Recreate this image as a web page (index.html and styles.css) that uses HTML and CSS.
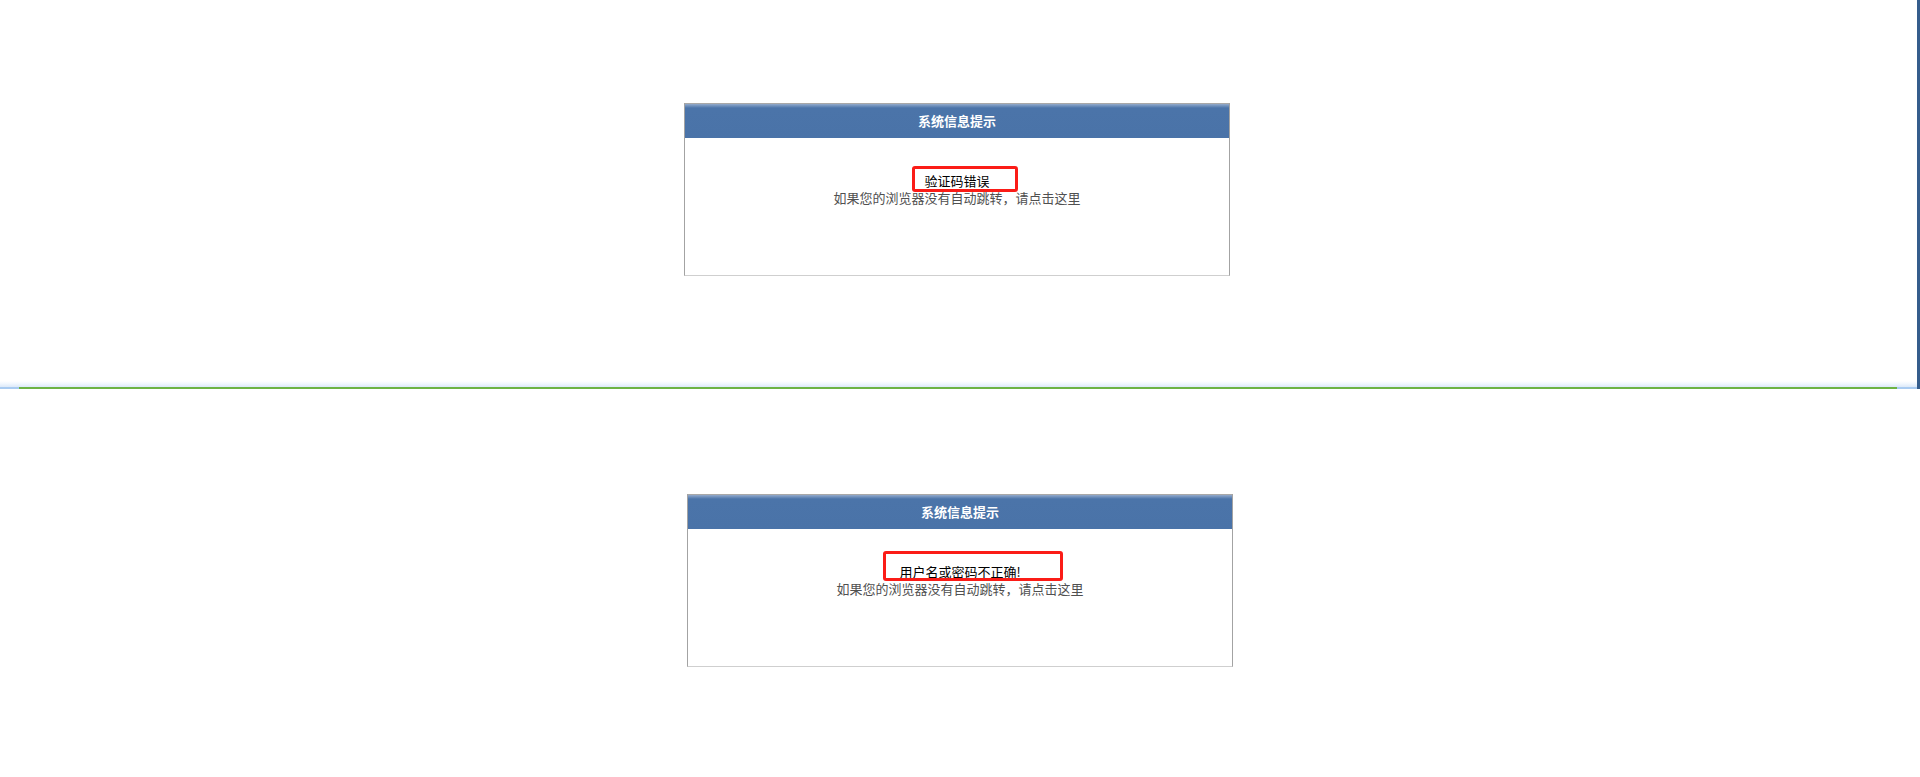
FILE: index.html
```html
<!DOCTYPE html>
<html lang="zh-CN">
<head>
<meta charset="utf-8">
<title>系统信息提示</title>
<link rel="stylesheet" href="styles.css">
</head>
<body>
  <section class="shot shot-top">
    <div class="pane pane-top">
      <div class="msgbox">
        <div class="msgbox-head">系统信息提示</div>
        <div class="msgbox-body">
          <div class="msg-title">验证码错误</div>
          <div class="msg-hint">如果您的浏览器没有自动跳转，请点击这里</div>
          <div class="mark mark-1"></div>
        </div>
      </div>
    </div>
    <div class="edge-bar"></div>
  </section>

  <div class="divider">
    <div class="divider-main">
      <div class="divider-glow"></div>
      <div class="divider-line">
        <span class="cap cap-left"></span>
        <span class="progress"></span>
        <span class="cap cap-right"></span>
      </div>
    </div>
    <div class="edge-bar"></div>
  </div>

  <section class="shot shot-bottom">
    <div class="pane pane-bottom">
      <div class="msgbox">
        <div class="msgbox-head">系统信息提示</div>
        <div class="msgbox-body">
          <div class="msg-title">用户名或密码不正确!</div>
          <div class="msg-hint">如果您的浏览器没有自动跳转，请点击这里</div>
          <div class="mark mark-2"></div>
        </div>
      </div>
    </div>
  </section>
</body>
</html>
```

FILE: styles.css
```css
html, body {
  margin: 0;
  padding: 0;
  background: #ffffff;
}

body {
  font-family: "Noto Sans CJK SC", "Noto Sans", sans-serif;
  font-size: 13px;
  width: 1920px;
  height: 777px;
  overflow: hidden;
}

.shot {
  display: flex;
}

.shot-top {
  height: 381px;
  background: #ffffff;
}

.pane {
  flex: 1;
  display: flex;
  flex-direction: column;
  align-items: center;
}

.pane-top {
  padding-top: 103px;
  padding-right: 3px;
}

.pane-bottom {
  padding-top: 105px;
}

.edge-bar {
  width: 3px;
  flex: none;
  background: #355d8c;
}

/* divider between the two screenshots */
.divider {
  display: flex;
  height: 8px;
}

.divider-main {
  flex: 1;
  display: flex;
  flex-direction: column;
}

.divider-glow {
  flex: 1;
  background: linear-gradient(#ffffff 0%, #f3f8fe 40%, #dce9f9 100%);
}

.divider-line {
  height: 2px;
  display: flex;
}

.cap {
  width: 19px;
  background: #a9cbf1;
}

.cap-right {
  width: 20px;
}

.progress {
  flex: 1;
  background: #6db344;
}

/* message box */
.msgbox {
  width: 544px;
  border-left: 1px solid #a3a3a3;
  border-right: 1px solid #a3a3a3;
  border-bottom: 1px solid #cfcfcf;
}

.msgbox-head {
  height: 34px;
  line-height: 34px;
  border-top: 1px solid #a8a8a8;
  background: linear-gradient(#93aacb 0px, #6e8fbb 2px, #4b74a9 4px, #4a73a8 100%);
  color: #ffffff;
  font-weight: bold;
  text-align: center;
}

.msgbox-body {
  position: relative;
  height: 137px;
  box-sizing: border-box;
  padding-top: 34px;
  background: #ffffff;
  text-align: center;
  line-height: 17px;
}

.msg-title {
  color: #000000;
}

.msg-hint {
  color: #505050;
}

/* red annotation rectangles drawn over the screenshot */
.mark {
  position: absolute;
  border: 3px solid #fb1c17;
  border-radius: 3px;
  box-sizing: border-box;
}

.mark-1 {
  left: 227px;
  top: 28px;
  width: 106px;
  height: 26px;
}

.mark-2 {
  left: 195px;
  top: 22px;
  width: 180px;
  height: 30px;
}
```
